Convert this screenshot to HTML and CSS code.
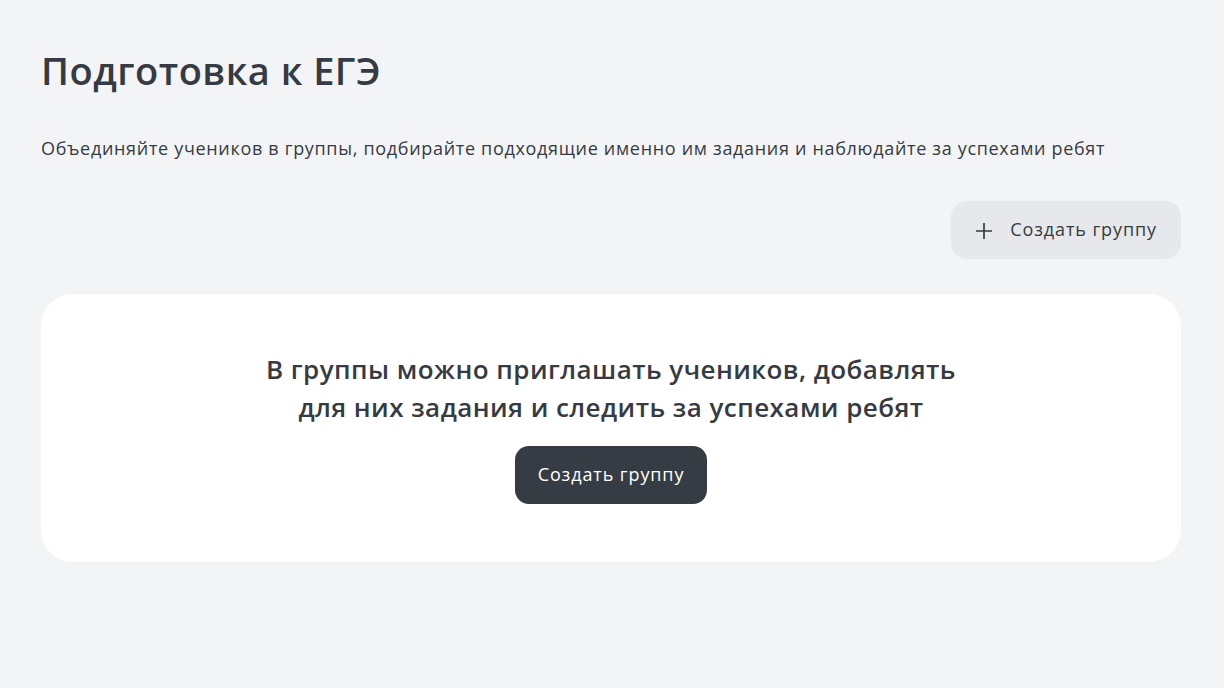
FILE: index.html
```html
<!DOCTYPE html>
<html lang="ru">
<head>
<meta charset="utf-8">
<link rel="stylesheet" href="styles.css">
</head>
<body>
<main class="page">
  <h1 class="title">Подготовка к ЕГЭ</h1>
  <p class="lead">Объединяйте учеников в группы, подбирайте подходящие именно им задания и наблюдайте за успехами ребят</p>
  <div class="actions">
    <button class="btn btn-light">
      <svg class="plus" width="16" height="16" viewBox="0 0 16 16"><path d="M8 0v16M0 8h16" stroke="#363b43" stroke-width="1.7" fill="none"/></svg>
      <span>Создать группу</span>
    </button>
  </div>
  <section class="card">
    <h2 class="card-title">В группы можно приглашать учеников, добавлять<br>для них задания и следить за успехами ребят</h2>
    <button class="btn btn-dark">Создать группу</button>
  </section>
</main>
</body>
</html>
```
FILE: styles.css
```css
* { box-sizing: border-box; }
html, body { margin: 0; padding: 0; }
body {
  background: #f3f4f6;
  font-family: "Open Sans", "Noto Sans", sans-serif;
  color: #363b43;
}
.page {
  padding: 46px 43px 0 41px;
}
.title {
  margin: 0;
  font-size: 38px;
  line-height: 48px;
  font-weight: 600;
  letter-spacing: 0.5px;
}
.lead {
  margin: 42px 0 0;
  font-size: 18px;
  line-height: 24px;
  letter-spacing: 0.68px;
}
.actions {
  display: flex;
  justify-content: flex-end;
  margin-top: 41px;
}
.btn {
  border: 0;
  font-family: inherit;
  font-size: 18px;
  height: 58px;
  border-radius: 16px;
  display: inline-flex;
  align-items: center;
  justify-content: center;
  letter-spacing: 0.9px;
  padding-bottom: 3px;
}
.btn-light {
  background: #e6e8eb;
  color: #363b43;
  padding-left: 25px;
  padding-right: 24px;
  gap: 18px;
}
.plus { margin-top: 3px; }
.btn-dark {
  background: #363c44;
  color: #fff;
  padding-left: 23px;
  padding-right: 23px;
  border-radius: 14px;
  margin-top: 20px;
}
.card {
  margin-top: 35px;
  background: #fff;
  border-radius: 32px;
  height: 268px;
  display: flex;
  flex-direction: column;
  align-items: center;
  padding-top: 56px;
}
.card-title {
  margin: 0;
  text-align: center;
  font-size: 26px;
  line-height: 38px;
  font-weight: 600;
  letter-spacing: 0.45px;
}
```
